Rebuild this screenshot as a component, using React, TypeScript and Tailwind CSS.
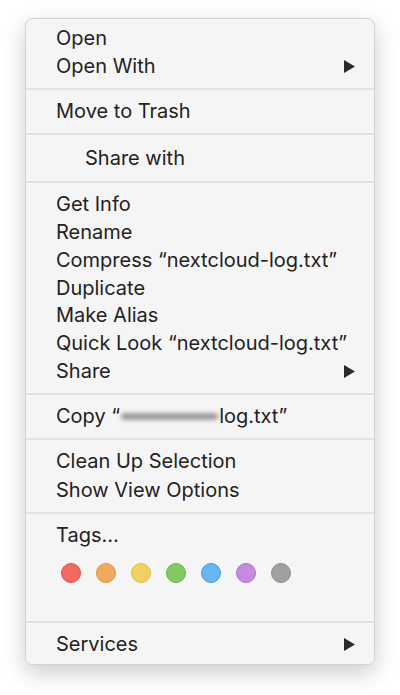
import { ReactNode } from 'react';

const font = { fontFamily: 'Inter, "Liberation Sans", sans-serif' };

function Arrow() {
  return (
    <svg width="11" height="13" viewBox="0 0 11 13" className="shrink-0">
      <path d="M0 0 L11 6.5 L0 13 Z" fill="#2a2a2a" />
    </svg>
  );
}

function Item({ children, submenu, className = 'h-[28px]' }: { children: ReactNode; submenu?: boolean; className?: string }) {
  return (
    <div className={`flex items-center justify-between pl-[30px] pr-[19px] ${className}`}>
      <span className="whitespace-nowrap">{children}</span>
      {submenu && <Arrow />}
    </div>
  );
}

function Separator() {
  return <div className="mt-[8px] mb-[7px] h-[2px] bg-[#e3e3e3]" />;
}

const tags = [
  { fill: 'bg-[#f06a62]', ring: 'border-[#e84a40]' },
  { fill: 'bg-[#eeaa5e]', ring: 'border-[#e8922d]' },
  { fill: 'bg-[#f0d064]', ring: 'border-[#e8bb2e]' },
  { fill: 'bg-[#86c864]', ring: 'border-[#5fb83e]' },
  { fill: 'bg-[#68b6ee]', ring: 'border-[#3f9ee8]' },
  { fill: 'bg-[#c68ade]', ring: 'border-[#b070d4]' },
  { fill: 'bg-[#a0a0a0]', ring: 'border-[#8c8c8c]' },
];

export default function App() {
  const mid = 'h-[27.86px]';
  return (
    <div className="min-h-screen bg-white pt-[18px]" style={font}>
      <div className="mx-auto w-[350px] rounded-[7px] border border-[#d2d2d2] bg-[#f5f5f5] pt-[5px] pb-[6px] text-[20px] text-[#222] shadow-[0_8px_22px_rgba(0,0,0,0.2)]">
        <Item>Open</Item>
        <Item submenu>Open With</Item>
        <Separator />
        <Item>Move to Trash</Item>
        <Separator />
        <div className="flex items-center h-[31px] pl-[59px]">Share with</div>
        <Separator />
        <Item className={mid}>Get Info</Item>
        <Item className={mid}>Rename</Item>
        <Item className={mid}>Compress “nextcloud-log.txt”</Item>
        <Item className={mid}>Duplicate</Item>
        <Item className={mid}>Make Alias</Item>
        <Item className={mid}>Quick Look “nextcloud-log.txt”</Item>
        <Item className={mid} submenu>Share</Item>
        <Separator />
        <Item>
          <span className="inline-flex items-center">
            Copy “
            <span className="mx-[1px] inline-block h-[7px] w-[97px] rounded-full bg-[#9a9a9a] blur-[2px]" />
            log.txt”
          </span>
        </Item>
        <Separator />
        <Item className="h-[28.5px]">Clean Up Selection</Item>
        <Item className="h-[28.5px]">Show View Options</Item>
        <Separator />
        <Item>Tags…</Item>
        <div className="flex gap-[15px] pl-[35px] pt-[14px] h-[64px]">
          {tags.map((t, i) => (
            <div key={i} className={`h-[20px] w-[20px] rounded-full border ${t.fill} ${t.ring}`} />
          ))}
        </div>
        <Separator />
        <Item submenu>Services</Item>
      </div>
    </div>
  );
}
